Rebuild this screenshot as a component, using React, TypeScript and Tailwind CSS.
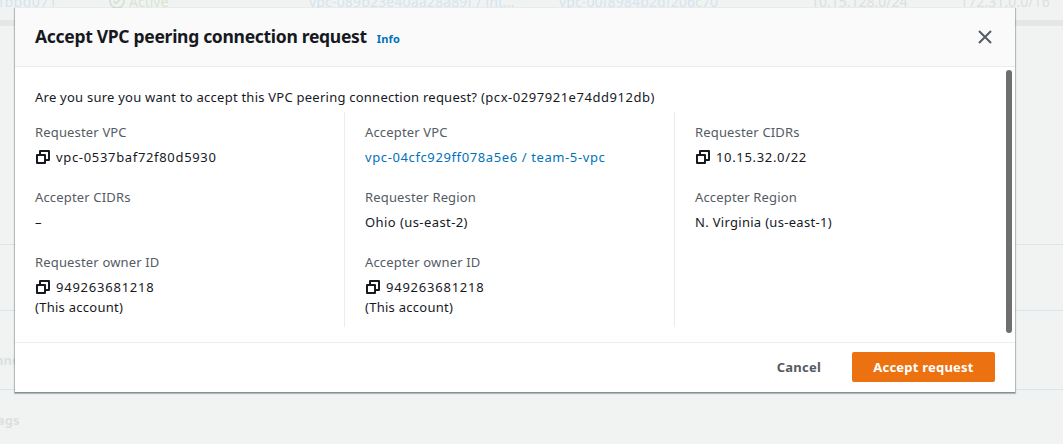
import type { ReactNode } from "react";

function CopyIcon() {
  return (
    <svg className="mr-[6px] ml-px h-[14px] w-[14px] shrink-0" viewBox="0 0 14 14" fill="none" stroke="#16191f" strokeWidth="2">
      <path d="M1 5h8v8H1z" strokeLinejoin="round" />
      <path d="M4 4V1h9v9h-3" strokeLinejoin="round" />
    </svg>
  );
}

type FieldProps = { label: string; children: ReactNode; copy?: boolean; note?: string; link?: boolean; tracking?: string };

function Field({ label, children, copy, note, link, tracking = "tracking-[0.67px]" }: FieldProps) {
  return (
    <div>
      <div className="mb-[5px] tracking-[0.16px] text-[#545b64]">{label}</div>
      <div className={link ? "flex h-5 items-center text-[#0073bb]" : "flex h-5 items-center"}>
        {copy && <CopyIcon />}
        <span className={tracking}>{children}</span>
      </div>
      {note && <div className="tracking-[0.27px]">{note}</div>}
    </div>
  );
}

function Backdrop() {
  return (
    <div className="flex h-full flex-col overflow-hidden text-[14px] leading-5 text-[#dcdfdf]">
      <div className="flex h-5 shrink-0 items-start">
        <div className="-mt-[8px] ml-[-10px] w-[119px] tracking-[0.5px] text-[#d5e4ee]">bfbbd071</div>
        <div className="-mt-[8px] flex w-[200px] items-center gap-1 text-[#d6e5d2]">
          <svg className="-mt-[2px] h-4 w-4" viewBox="0 0 16 16" fill="none" stroke="currentColor" strokeWidth="2">
            <circle cx="8" cy="8" r="7" />
            <path d="m4.5 8 2.5 2.5L11.5 6" />
          </svg>
          Active
        </div>
        <div className="-mt-[8px] w-[250px] tracking-[0.17px] text-[#d5e4ee]">vpc-089b23e40aa28a89f / int…</div>
        <div className="-mt-[8px] w-[179px] tracking-[0.12px] text-[#d5e4ee]">vpc-00f8984b2df206c70</div>
        <div className="-mt-[8px] ml-[73px] w-[149px]">10.15.128.0/24</div>
        <div className="-mt-[8px] shrink-0 whitespace-nowrap tracking-[0.1px]">172.31.0.0/16</div>
      </div>
      <div className="h-[6px] shrink-0 bg-[#e5e7e7]" />
      <div className="h-[219px] shrink-0 border-b border-[#dfe3e3]" />
      <div className="h-[66px] shrink-0 border-b border-[#d7e5ee]" />
      <div className="h-[79px] shrink-0 border-b border-[#d7e5ee] pt-[39px] text-[13px] font-bold">
        <div className="-ml-[5px]">nnections</div>
      </div>
      <div className="-ml-[10px] pt-[20px] text-[13px] font-bold tracking-[0.2px]">Tags</div>
    </div>
  );
}

export default function App() {
  return (
    <div className="relative h-[444px] w-[1063px] overflow-hidden bg-[#f1f3f3] font-['Noto_Sans',sans-serif] text-[#16191f]">
      <Backdrop />
      <section
        role="dialog"
        className="absolute top-2 left-[15px] flex h-[384px] w-[1000px] flex-col bg-white shadow-[0_1px_1px_0_rgba(0,28,36,0.3),0_1px_1px_1px_rgba(0,28,36,0.22)]"
      >
        <header className="flex h-[59px] shrink-0 items-center border-b border-[#eaeded] bg-[#fafafa] px-5">
          <h1 className="-mt-0.5 text-[17.5px] leading-[22px] font-bold tracking-[-0.3px]">Accept VPC peering connection request</h1>
          <a className="mt-1 ml-[10px] text-[11px] font-bold tracking-[0.15px] text-[#0073bb]">Info</a>
          <button className="mr-[3px] ml-auto">
            <svg className="h-[14px] w-[14px]" viewBox="0 0 14 14" fill="none" stroke="#545b64" strokeWidth="2">
              <path d="m1 1 12 12M13 1 1 13" />
            </svg>
          </button>
        </header>
        <div className="flex min-h-0 flex-1 text-[13px] leading-5">
          <main className="flex-1 pt-5 pl-5">
            <p className="tracking-[0.24px]">
              Are you sure you want to accept this VPC peering connection request?{" "}
              <span className="tracking-[0.54px]">(pcx-0297921e74dd912db)</span>
            </p>
            <div className="mt-[5px] flex h-[215px]">
              <div className="flex w-[310px] flex-col gap-5 border-r border-[#eaeded] pt-[10px]">
                <Field label="Requester VPC" copy>vpc-0537baf72f80d5930</Field>
                <Field label="Accepter CIDRs">–</Field>
                <Field label="Requester owner ID" copy note="(This account)" tracking="tracking-[0.77px]">949263681218</Field>
              </div>
              <div className="flex w-[330px] flex-col gap-5 border-r border-[#eaeded] pt-[10px] pl-5">
                <Field label="Accepter VPC" link tracking="tracking-[0.61px]">vpc-04cfc929ff078a5e6 / team-5-vpc</Field>
                <Field label="Requester Region" tracking="tracking-[0.42px]">Ohio (us-east-2)</Field>
                <Field label="Accepter owner ID" copy note="(This account)" tracking="tracking-[0.77px]">949263681218</Field>
              </div>
              <div className="flex flex-1 flex-col gap-5 pt-[10px] pl-5">
                <Field label="Requester CIDRs" copy>10.15.32.0/22</Field>
                <Field label="Accepter Region" tracking="tracking-[0.3px]">N. Virginia (us-east-1)</Field>
              </div>
            </div>
          </main>
          <div className="w-[9px] shrink-0 pt-[3px]">
            <div className="h-[263px] w-[6px] rounded-full bg-[#6f6f6f]" />
          </div>
        </div>
        <footer className="flex h-[50px] shrink-0 items-start justify-end border-t border-[#eaeded] px-5 pt-[9px] text-[13px] leading-[30px] font-bold tracking-[0.22px]">
          <button className="mr-[31px] text-[#545b64]">Cancel</button>
          <button className="h-[30px] w-[143px] rounded-[2px] bg-[#ec7211] text-white">Accept request</button>
        </footer>
      </section>
    </div>
  );
}
